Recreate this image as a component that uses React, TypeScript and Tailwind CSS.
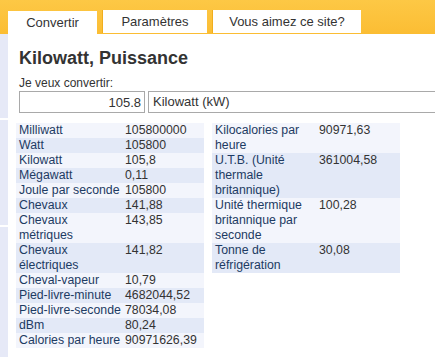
import { useState } from "react";

const leftRows: [string[], string][] = [
  [["Milliwatt"], "105800000"],
  [["Watt"], "105800"],
  [["Kilowatt"], "105,8"],
  [["Mégawatt"], "0,11"],
  [["Joule par seconde"], "105800"],
  [["Chevaux"], "141,88"],
  [["Chevaux", "métriques"], "143,85"],
  [["Chevaux", "électriques"], "141,82"],
  [["Cheval-vapeur"], "10,79"],
  [["Pied-livre-minute"], "4682044,52"],
  [["Pied-livre-seconde"], "78034,08"],
  [["dBm"], "80,24"],
  [["Calories par heure"], "90971626,39"],
];

const rightRows: [string[], string][] = [
  [["Kilocalories par", "heure"], "90971,63"],
  [["U.T.B. (Unité", "thermale", "britannique)"], "361004,58"],
  [["Unité thermique", "britannique par", "seconde"], "100,28"],
  [["Tonne de", "réfrigération"], "30,08"],
];

const ResultTable = ({ rows, labelW }: { rows: [string[], string][]; labelW: string }) => (
  <table className="border-collapse text-[12.3px] leading-[15px] w-[188px] table-fixed">
    <tbody>
      {rows.map(([lines, value], i) => (
        <tr key={lines.join(" ")} className={i % 2 ? "bg-[#e3e9f7]" : "bg-[#f3f5fc]"}>
          <td className={`${labelW} align-top pl-[3px] pr-0 py-0 text-[#1d3b63] whitespace-nowrap`}>
            {lines.map((l) => (
              <div key={l}>{l}</div>
            ))}
          </td>
          <td className="align-top p-0 text-[#333] whitespace-nowrap">{value}</td>
        </tr>
      ))}
    </tbody>
  </table>
);

export default function App() {
  const [tab, setTab] = useState(0);
  const [amount, setAmount] = useState("105.8");
  const tabs = [
    { label: "Convertir", w: "w-[89px]" },
    { label: "Paramètres", w: "w-[105px]" },
    { label: "Vous aimez ce site?", w: "w-[149px]" },
  ];

  return (
    <div className="w-[435px] h-[357px] overflow-hidden bg-white font-['Liberation_Sans',Arial,sans-serif] text-[#333]">
      <div className="h-[34px] bg-gradient-to-b from-[#fdc845] to-[#fbbd33] flex items-end pl-[8px] gap-[5px]">
        {tabs.map((t, i) => (
          <button
            key={t.label}
            onClick={() => setTab(i)}
            className={`${t.w} h-[23px] bg-white text-[13px] text-[#333] flex items-center justify-center ${
              i === tab ? "" : "border-l border-[#f0ae1e] mb-[1px] h-[22px]"
            }`}
          >
            {t.label}
          </button>
        ))}
      </div>

      <div className="flex h-[323px]">
        <div className="w-[8px] flex flex-col">
          <div className="h-[84px] bg-[#e6e9f7]" />
          <div className="h-[2px] bg-white" />
          <div className="h-[105px] bg-[#e6e9f7]" />
          <div className="h-[2px] bg-white" />
          <div className="flex-1 bg-[#e6e9f7]" />
        </div>

        <div className="flex-1 min-w-0">
          <h1 className="pl-[11px] pt-[13px] text-[18px] leading-[22px] font-bold text-[#333]">
            Kilowatt, Puissance
          </h1>
          <div className="pl-[11px] mt-[7px] text-[12px] leading-[14px] text-[#333]">Je veux convertir:</div>
          <div className="pl-[11px] flex gap-[3px] mt-[1px]">
            <input
              value={amount}
              onChange={(e) => setAmount(e.target.value)}
              className="w-[126px] h-[22px] border border-[#a9a9a9] text-right pr-[3px] text-[13px] text-[#333] outline-none"
            />
            <div className="w-[300px] h-[22px] border border-[#a9a9a9] pl-[4px] text-[13px] leading-[20px] text-[#333] shrink-0">
              Kilowatt (kW)
            </div>
          </div>

          <div className="flex items-start gap-[8px] pl-[8px] mt-[10px]">
            <ResultTable rows={leftRows} labelW="w-[109px]" />
            <ResultTable rows={rightRows} labelW="w-[107px]" />
          </div>
        </div>
      </div>
    </div>
  );
}
